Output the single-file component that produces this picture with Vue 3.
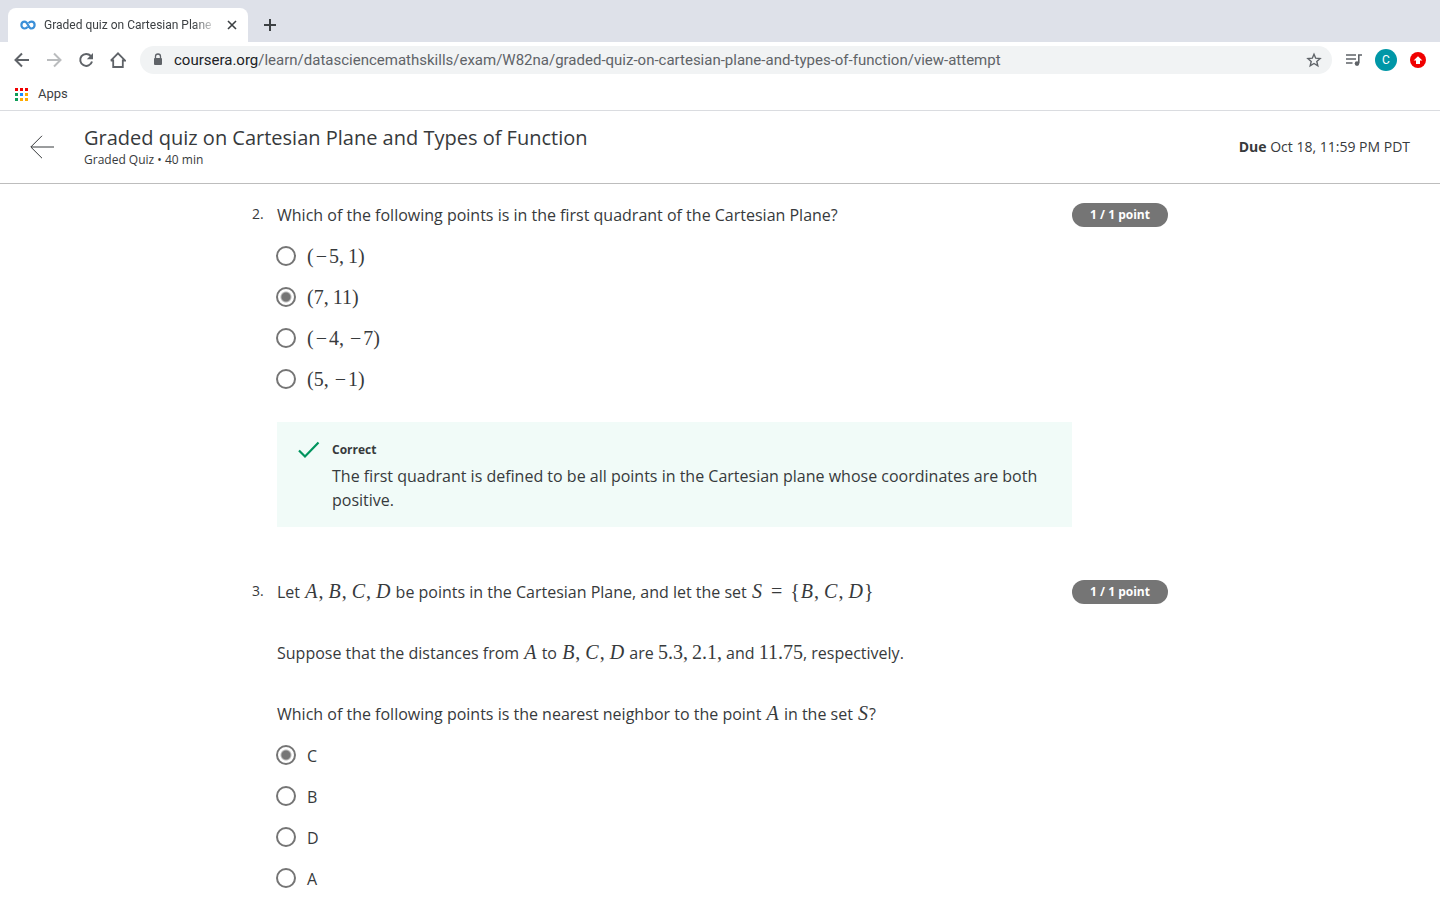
<script setup>
import { reactive } from 'vue'

const kinds = { '−': 'minus', '=': 'rel', ',': 'punct', '(': 'paren', ')': 'paren' }
const kindOf = (c) => kinds[c] || (/[A-Z]/.test(c) ? 'var' : 'num')

// $...$ marks a math run inside a sentence
const parse = (s) =>
  s.split('$').map((text, i) => ({
    math: i % 2 === 1,
    text,
    tokens: i % 2 === 1 ? text.match(/\d+(\.\d+)?|\S/g).map((c) => ({ c, kind: kindOf(c) })) : [],
  }))

const questions = reactive([
  {
    id: 2,
    prompt: ['Which of the following points is in the first quadrant of the Cartesian Plane?'],
    options: ['$(−5,1)$', '$(7,11)$', '$(−4,−7)$', '$(5,−1)$'],
    selected: 1,
    feedback:
      'The first quadrant is defined to be all points in the Cartesian plane whose coordinates are both positive.',
  },
  {
    id: 3,
    prompt: [
      'Let $A,B,C,D$ be points in the Cartesian Plane, and let the set $S={B,C,D}$',
      'Suppose that the distances from $A$ to $B,C,D$ are $5.3,2.1,$ and $11.75$, respectively.',
      'Which of the following points is the nearest neighbor to the point $A$ in the set $S$?',
    ],
    options: ['C', 'B', 'D', 'A'],
    selected: 0,
  },
])

const dots = ['#f00000', '#f00000', '#f00000', '#0f9d58', '#1a8cff', '#ffab00', '#0f9d58', '#ffab00', '#ffab00']
</script>

<template>
  <div class="window">
    <div class="tabs">
      <div class="tab">
        <svg class="favicon" width="16" height="16" viewBox="0 0 16 16" fill="none" stroke="#3a8fd8" stroke-width="2.2">
          <path d="M7.600 9.800C6.900 11 5.900 11.500 4.700 11.500 2.800 11.500 1.400 10 1.400 8.100s1.400-3.400 3.300-3.400c3.300 0 3.600 6.800 6.700 6.800 1.900 0 3.200-1.500 3.200-3.400s-1.300-3.400-3.200-3.400c-1.100 0-2 .5-2.700 1.500" />
        </svg>
        <span class="tab-title">Graded quiz on Cartesian Plane</span>
        <button class="icon-btn close" aria-label="Close tab">
          <svg width="10" height="10" viewBox="0 0 10 10" stroke="#3c4043" stroke-width="1.6"><path d="M1 1l8 8M9 1L1 9" /></svg>
        </button>
      </div>
      <button class="icon-btn plus" aria-label="New tab">
        <svg width="12" height="12" viewBox="0 0 12 12" stroke="#3c4043" stroke-width="2"><path d="M6 0v12M0 6h12" /></svg>
      </button>
    </div>

    <div class="toolbar">
      <nav class="nav-buttons">
        <button class="icon-btn" aria-label="Back">
          <svg width="16" height="16" viewBox="0 0 16 16" fill="none" stroke="#5f6368" stroke-width="2"><path d="M15 8H2M8 1.500L1.500 8 8 14.500" /></svg>
        </button>
        <button class="icon-btn" aria-label="Forward">
          <svg width="16" height="16" viewBox="0 0 16 16" fill="none" stroke="#babcbe" stroke-width="2"><path d="M1 8h13M8 1.500L14.500 8 8 14.500" /></svg>
        </button>
        <button class="icon-btn" aria-label="Reload">
          <svg width="16" height="16" viewBox="0 0 16 16" fill="none"><path d="M12.800 4A6 6 0 1 0 14 9.500" stroke="#5f6368" stroke-width="2" /><path d="M15 1v6.200H8.800z" fill="#5f6368" /></svg>
        </button>
        <button class="icon-btn" aria-label="Home">
          <svg width="16" height="16" viewBox="0 0 16 16" fill="none" stroke="#5f6368" stroke-width="1.800"><path d="M3.200 7.500V15h9.600V7.500M.8 8.700L8 1.300l7.200 7.400H12.800M.8 8.700h2.400" /></svg>
        </button>
      </nav>
      <div class="address">
        <svg width="10" height="14" viewBox="0 0 10 14"><path d="M2.500 6V3.500a2.500 2.500 0 0 1 5 0V6" fill="none" stroke="#5f6368" stroke-width="1.300" /><rect x="1" y="5" width="8" height="7" rx="1" fill="#5f6368" /></svg>
        <span class="url"><b>coursera.org</b>/learn/datasciencemathskills/exam/W82na/graded-quiz-on-cartesian-plane-and-types-of-function/view-attempt</span>
        <button class="icon-btn" aria-label="Bookmark this page">
          <svg width="16" height="16" viewBox="0 0 16 16" fill="none" stroke="#5f6368" stroke-width="1.400"><path d="M8 2.200l1.700 4 4.400.4-3.300 2.900 1 4.300L8 11.500l-3.800 2.300 1-4.300-3.300-2.900 4.400-.4z" /></svg>
        </button>
      </div>
      <div class="tools">
        <button class="icon-btn" aria-label="Media controls">
          <svg width="16" height="14" viewBox="0 0 16 14" fill="none" stroke="#5f6368" stroke-width="1.600"><path d="M0 2h10M0 6h10M0 10h6.500M16 2h-3.200v8" /><circle cx="11" cy="10.600" r="2.300" fill="#5f6368" stroke="none" /></svg>
        </button>
        <button class="icon-btn avatar" aria-label="Profile">C</button>
        <button class="icon-btn" aria-label="Update available">
          <svg width="16" height="16" viewBox="0 0 16 16"><circle cx="8" cy="8" r="8" fill="#f00000" /><path d="M8 4.200L3.600 8.600H6V12h4V8.600h2.400z" fill="#fff" /></svg>
        </button>
      </div>
    </div>

    <div class="bookmarks">
      <a href="#" class="apps">
        <svg width="13" height="13" viewBox="0 0 13 13">
          <rect v-for="(c, i) in dots" :key="i" :x="(i % 3) * 5" :y="Math.floor(i / 3) * 5" width="3" height="3" :fill="c" />
        </svg>
        Apps
      </a>
    </div>

    <header class="quiz-header">
      <button class="icon-btn" aria-label="Back to course">
        <svg width="24" height="24" viewBox="0 0 24 24" fill="none" stroke="#373a3c" stroke-width="1"><path d="M24 12H1M12 .8L.8 12 12 23.200" /></svg>
      </button>
      <div class="heading">
        <h1>Graded quiz on Cartesian Plane and Types of Function</h1>
        <p>Graded Quiz • 40 min</p>
      </div>
      <p class="due"><b>Due</b> Oct 18, 11:59 PM PDT</p>
    </header>

    <main class="quiz">
      <section v-for="q in questions" :key="q.id" class="question">
        <span class="number">{{ q.id }}.</span>
        <fieldset class="body">
          <legend class="prompt">
            <span v-for="(p, pi) in q.prompt" :key="pi" class="para">
              <template v-for="(s, si) in parse(p)" :key="si"><span v-if="s.math" class="math"><span v-for="(t, ti) in s.tokens" :key="ti" :class="t.kind">{{ t.c }}</span></span><template v-else>{{ s.text }}</template></template>
            </span>
          </legend>
          <label v-for="(o, oi) in q.options" :key="oi" class="option">
            <input v-model="q.selected" type="radio" :name="'q' + q.id" :value="oi" />
            <span class="choice">
              <template v-for="(s, si) in parse(o)" :key="si"><span v-if="s.math" class="math"><span v-for="(t, ti) in s.tokens" :key="ti" :class="t.kind">{{ t.c }}</span></span><template v-else>{{ s.text }}</template></template>
            </span>
          </label>
          <div v-if="q.feedback" class="feedback">
            <svg width="22" height="18" viewBox="0 0 22 18" fill="none" stroke="#00945e" stroke-width="2.200"><path d="M1 9.500L7 15.500 20.500 1.500" /></svg>
            <div>
              <h2>Correct</h2>
              <p>{{ q.feedback }}</p>
            </div>
          </div>
        </fieldset>
        <span class="points">1 / 1 point</span>
      </section>
    </main>
  </div>
</template>

<style>
body {
  margin: 0;
  background: #fff;
}
</style>

<style scoped>
.window {
  font-family: 'Open Sans', 'Noto Sans', sans-serif;
  color: #373a3c;
}
h1, h2, p {
  margin: 0;
  font-weight: 400;
}
.icon-btn {
  display: flex;
  align-items: center;
  justify-content: center;
  flex: none;
  padding: 0;
  border: 0;
  background: none;
}
.tabs, .toolbar, .bookmarks {
  display: flex;
  align-items: center;
  font-family: Roboto, sans-serif;
}
.tabs {
  height: 34px;
  padding: 8px 8px 0;
  background: #dee1e9;
}
.tab {
  display: flex;
  align-items: center;
  box-sizing: border-box;
  width: 240px;
  height: 34px;
  padding: 0 10px 0 12px;
  border-radius: 8px 8px 0 0;
  background: #fff;
}
.tab-title {
  flex: 1;
  min-width: 0;
  margin: 0 8px;
  overflow: hidden;
  white-space: nowrap;
  font-size: 12px;
  line-height: 16px;
  color: #3c4043;
  mask-image: linear-gradient(to right, #000 86%, transparent);
}
.close {
  width: 12px;
}
.plus {
  margin-left: 16px;
}
.toolbar {
  height: 36px;
  padding: 0 14px;
}
.nav-buttons, .tools {
  display: flex;
  align-items: center;
  gap: 16px;
}
.address {
  display: flex;
  align-items: center;
  flex: 1;
  min-width: 0;
  height: 28px;
  margin: 0 14px;
  padding: 0 10px 0 13px;
  border-radius: 14px;
  background: #f1f3f4;
}
.url {
  flex: 1;
  min-width: 0;
  margin-left: 11px;
  overflow: hidden;
  white-space: nowrap;
  font-size: 15px;
  line-height: 20px;
  color: #5f6368;
}
.url b {
  font-weight: 400;
  color: #202124;
}
.tools {
  gap: 13px;
}
.avatar {
  width: 22px;
  height: 22px;
  border-radius: 50%;
  background: #0097a7;
  color: #fff;
  font: 12px Roboto, sans-serif;
}
.bookmarks {
  height: 32px;
  padding: 0 15px;
  border-bottom: 1px solid #dadce0;
}
.apps {
  display: flex;
  align-items: center;
  gap: 10px;
  font-size: 13px;
  line-height: 14px;
  color: #3c4043;
  text-decoration: none;
}
.quiz-header {
  display: flex;
  align-items: center;
  height: 72px;
  padding: 0 30px;
  border-bottom: 1px solid #bdbdbd;
}
.heading {
  flex: 1;
  margin-left: 30px;
}
h1 {
  font-size: 20px;
  line-height: 26px;
}
.heading p {
  font-size: 12px;
  line-height: 18px;
}
.due {
  font-size: 14px;
  line-height: 18px;
}
.quiz {
  box-sizing: border-box;
  max-width: 936px;
  margin: 0 auto;
  padding: 19px 20px 0 0;
}
.question {
  display: grid;
  grid-template-columns: 25px 1fr 96px;
  align-items: start;
  margin-bottom: 53px;
}
.question:last-child {
  margin-bottom: 0;
}
.number {
  font-size: 14px;
  line-height: 22px;
}
.body {
  min-width: 0;
  margin: 0;
  padding: 0;
  border: 0;
}
.prompt {
  padding: 0;
}
.para {
  display: block;
  margin-bottom: 37px;
  font-size: 16px;
  line-height: 24px;
}
.para:last-child {
  margin-bottom: 9px;
}
.option {
  display: flex;
  align-items: center;
  gap: 11px;
  box-sizing: border-box;
  height: 41px;
  margin-left: -1px;
  padding-bottom: 1px;
  font-size: 16px;
  line-height: 24px;
}
.choice {
  padding-top: 2px;
}
.option input {
  appearance: none;
  box-sizing: border-box;
  width: 20px;
  height: 20px;
  margin: 0;
  border: 2px solid #757575;
  border-radius: 50%;
  background: #fff;
}
.option input:checked {
  background: radial-gradient(circle, #757575 4px, #fff 6px);
}
.math {
  font-family: 'Liberation Serif', serif;
  font-size: 20px;
  line-height: 1;
  white-space: nowrap;
}
.var {
  margin: 0 1px;
  font-style: italic;
}
.punct {
  margin-right: 4px;
}
.punct:last-child {
  margin-right: 0;
}
.minus {
  margin: 0 2px;
}
.rel {
  margin: 0 8px;
}
.feedback {
  display: flex;
  gap: 12px;
  margin-top: 22px;
  padding: 16px 20px 15px 21px;
  background: #f1fbf8;
}
.feedback svg {
  flex: none;
  margin-top: 3px;
}
.feedback h2 {
  margin-bottom: 2px;
  font-size: 12px;
  line-height: 24px;
  font-weight: 700;
}
.feedback p {
  font-size: 16px;
  line-height: 24px;
}
.points {
  border-radius: 12px;
  background: #757575;
  color: #fff;
  font-size: 12px;
  line-height: 24px;
  font-weight: 700;
  text-align: center;
}
</style>
